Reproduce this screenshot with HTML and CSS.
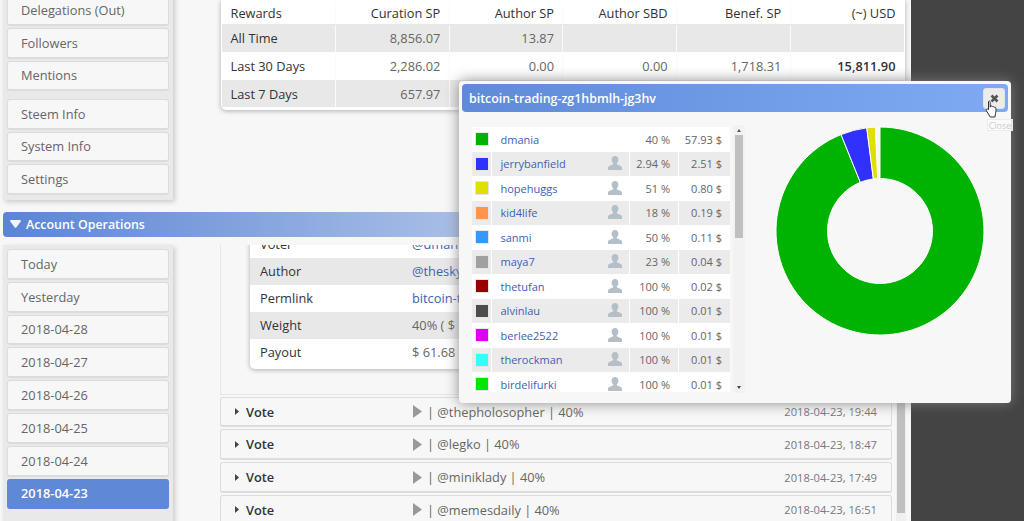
FILE: index.html
```html
<!DOCTYPE html>
<html lang="en">
  <head>
    <meta charset="UTF-8" />
    <title>Account Operations</title>
    <link rel="stylesheet" href="styles.css">
  </head>
  <body>
    <svg class="defs" width="0" height="0">
      <symbol id="user" viewBox="0 0 14 14">
        <path d="M7 0C4.900 0 3.600 1.600 3.600 3.700c0 1.500.7 2.900 1.600 3.600v.9L1.400 10C.5 10.400 0 11 0 12v2h14v-2c0-1-.5-1.600-1.400-2L8.800 8.200v-.9c.9-.7 1.600-2.100 1.600-3.600C10.400 1.600 9.100 0 7 0z"/>
      </symbol>
      <symbol id="play" viewBox="0 0 9 13">
        <path d="M0 0l9 6.500L0 13z"/>
      </symbol>
      <symbol id="caret" viewBox="0 0 4 7">
        <path d="M0 0l4 3.500L0 7z"/>
      </symbol>
    </svg>

    <div class="page">
      <div class="top-row">
        <nav class="side-panel">
          <div class="side-group">
            <a class="side-item">Delegations (Out)</a>
            <a class="side-item">Followers</a>
            <a class="side-item">Mentions</a>
          </div>
          <div class="side-group">
            <a class="side-item">Steem Info</a>
            <a class="side-item">System Info</a>
            <a class="side-item">Settings</a>
          </div>
        </nav>

        <div class="rewards-card">
          <table class="rewards">
            <tr class="head">
              <th class="label">Rewards</th>
              <th>Curation SP</th>
              <th>Author SP</th>
              <th>Author SBD</th>
              <th>Benef. SP</th>
              <th>(~) USD</th>
            </tr>
            <tr class="grey">
              <td class="label">All Time</td>
              <td>8,856.07</td>
              <td>13.87</td>
              <td></td>
              <td></td>
              <td></td>
            </tr>
            <tr>
              <td class="label">Last 30 Days</td>
              <td>2,286.02</td>
              <td>0.00</td>
              <td>0.00</td>
              <td>1,718.31</td>
              <td class="total">15,811.90</td>
            </tr>
            <tr class="grey">
              <td class="label">Last 7 Days</td>
              <td>657.97</td>
              <td></td>
              <td></td>
              <td></td>
              <td></td>
            </tr>
          </table>
        </div>
      </div>

      <div class="section-bar">
        <svg class="section-arrow" width="11" height="8" viewBox="0 0 11 8"><path d="M1 0h9c.8 0 1.200.8.700 1.400L6.200 7.400c-.4.400-1 .4-1.400 0L.3 1.400C-.2.8.2 0 1 0z"/></svg>
        <span>Account Operations</span>
      </div>

      <div class="ops-row">
        <nav class="side-panel dates">
          <div class="side-group">
            <a class="side-item">Today</a>
            <a class="side-item">Yesterday</a>
            <a class="side-item">2018-04-28</a>
            <a class="side-item">2018-04-27</a>
            <a class="side-item">2018-04-26</a>
            <a class="side-item">2018-04-25</a>
            <a class="side-item">2018-04-24</a>
            <a class="side-item active">2018-04-23</a>
          </div>
        </nav>

        <div class="ops-scroll">
          <div class="ops-list">
            <div class="op-open">
              <div class="op-card">
                <div class="op-line"><b>Voter</b><a>@dmani</a></div>
                <div class="op-line grey"><b>Author</b><a>@thesky</a></div>
                <div class="op-line"><b>Permlink</b><a>bitcoin-t</a></div>
                <div class="op-line grey"><b>Weight</b><span>40% ( $</span></div>
                <div class="op-line"><b>Payout</b><span>$ 61.68</span></div>
              </div>
            </div>
            <div class="op-row">
              <svg class="caret"><use href="#caret"/></svg>
              <b class="op-type">Vote</b>
              <svg class="play"><use href="#play"/></svg>
              <span class="op-text">| @thepholosopher | 40%</span>
              <span class="op-date">2018-04-23, 19:44</span>
            </div>
            <div class="op-row">
              <svg class="caret"><use href="#caret"/></svg>
              <b class="op-type">Vote</b>
              <svg class="play"><use href="#play"/></svg>
              <span class="op-text">| @legko | 40%</span>
              <span class="op-date">2018-04-23, 18:47</span>
            </div>
            <div class="op-row">
              <svg class="caret"><use href="#caret"/></svg>
              <b class="op-type">Vote</b>
              <svg class="play"><use href="#play"/></svg>
              <span class="op-text">| @miniklady | 40%</span>
              <span class="op-date">2018-04-23, 17:49</span>
            </div>
            <div class="op-row">
              <svg class="caret"><use href="#caret"/></svg>
              <b class="op-type">Vote</b>
              <svg class="play"><use href="#play"/></svg>
              <span class="op-text">| @memesdaily | 40%</span>
              <span class="op-date">2018-04-23, 16:51</span>
            </div>
          </div>
          <div class="ops-track"><div class="ops-thumb"></div></div>
        </div>
      </div>
    </div>

    <!-- payout popup -->
    <div class="modal">
      <div class="modal-head">
        <span>bitcoin-trading-zg1hbmlh-jg3hv</span>
        <button class="modal-close">
          <svg width="9" height="9" viewBox="0 0 9 9"><path d="M1.500 1.500l6 6M7.500 1.500l-6 6"/></svg>
        </button>
      </div>
      <div class="modal-body">
        <div class="voters-wrap">
          <div class="voters">
            <div class="voter"><i class="swatch c1"></i><a class="name">dmania</a><span class="pct">40 %</span><span class="usd">57.93 $</span></div>
            <div class="voter grey"><i class="swatch c2"></i><a class="name">jerrybanfield<svg class="user"><use href="#user"/></svg></a><span class="pct">2.94 %</span><span class="usd">2.51 $</span></div>
            <div class="voter"><i class="swatch c3"></i><a class="name">hopehuggs<svg class="user"><use href="#user"/></svg></a><span class="pct">51 %</span><span class="usd">0.80 $</span></div>
            <div class="voter grey"><i class="swatch c4"></i><a class="name">kid4life<svg class="user"><use href="#user"/></svg></a><span class="pct">18 %</span><span class="usd">0.19 $</span></div>
            <div class="voter"><i class="swatch c5"></i><a class="name">sanmi<svg class="user"><use href="#user"/></svg></a><span class="pct">50 %</span><span class="usd">0.11 $</span></div>
            <div class="voter grey"><i class="swatch c6"></i><a class="name">maya7<svg class="user"><use href="#user"/></svg></a><span class="pct">23 %</span><span class="usd">0.04 $</span></div>
            <div class="voter"><i class="swatch c7"></i><a class="name">thetufan<svg class="user"><use href="#user"/></svg></a><span class="pct">100 %</span><span class="usd">0.02 $</span></div>
            <div class="voter grey"><i class="swatch c8"></i><a class="name">alvinlau<svg class="user"><use href="#user"/></svg></a><span class="pct">100 %</span><span class="usd">0.01 $</span></div>
            <div class="voter"><i class="swatch c9"></i><a class="name">berlee2522<svg class="user"><use href="#user"/></svg></a><span class="pct">100 %</span><span class="usd">0.01 $</span></div>
            <div class="voter grey"><i class="swatch c10"></i><a class="name">therockman<svg class="user"><use href="#user"/></svg></a><span class="pct">100 %</span><span class="usd">0.01 $</span></div>
            <div class="voter"><i class="swatch c11"></i><a class="name">birdelifurki<svg class="user"><use href="#user"/></svg></a><span class="pct">100 %</span><span class="usd">0.01 $</span></div>
          </div>
          <div class="voters-track">
            <i class="arrow up"></i>
            <div class="voters-thumb"></div>
            <i class="arrow down"></i>
          </div>
        </div>
        <svg class="donut" width="210" height="210" viewBox="0 0 210 210">
          <path fill="#00b300" d="M105 1A104 104 0 1 1 66.040 8.570L85.330 56.320A52.500 52.500 0 1 0 105 52.500z"/>
          <path fill="#3030ff" d="M66.040 8.570A104 104 0 0 1 91.780 1.840L98.330 52.920A52.500 52.500 0 0 0 85.330 56.320z"/>
          <path fill="#dfdf00" d="M91.780 1.840A104 104 0 0 1 100.280 1.110L102.620 52.550A52.500 52.500 0 0 0 98.330 52.920z"/>
        </svg>
      </div>
    </div>

    <div class="tooltip">Close</div>
    <svg class="cursor" width="14" height="19" viewBox="0 0 14 19">
      <path d="M3.500 1.500c.7-.7 1.700-.3 1.700.7v5l.3-1.200c.9-.4 1.500 0 1.700.7.800-.5 1.600-.2 1.800.6.900-.4 1.700 0 1.900.8.300 1.800.2 3.900-.4 5.600l-.6 3.300H5.200L1.600 11c-.6-.8-.4-1.700.3-2 .6-.2 1.100.1 1.600.7z"/>
    </svg>
  </body>
</html>
```

FILE: styles.css
```css
* {
  margin: 0;
  padding: 0;
  box-sizing: border-box;
}

body {
  font-family: "Open Sans", "Liberation Sans", sans-serif;
  font-size: 12.800px;
  background-color: #444;
  height: 521px;
  overflow: hidden;
  position: relative;
}

.defs {
  position: absolute;
}

.page {
  width: 911px;
  height: 527px;
  margin-top: -6px;
  background-color: #f7f7f7;
  overflow: hidden;
}

/* top row */
.top-row {
  display: flex;
  align-items: flex-start;
}

.side-panel {
  width: 170px;
  margin-left: 3px;
  padding: 1px 4px 4.500px;
  background-color: #e9e9e9;
  box-shadow: 2px 2px 5px rgba(0, 0, 0, 0.18);
  display: flex;
  flex-direction: column;
  gap: 7.400px;
}

.side-group {
  display: flex;
  flex-direction: column;
  gap: 2px;
}

.side-item {
  height: 30.800px;
  padding-left: 13px;
  display: flex;
  align-items: center;
  color: #666;
  background-color: #f7f7f7;
  border: 1px solid #dcdcdc;
  border-bottom-width: 2px;
  border-radius: 3px;
}

.side-item.active {
  background-color: #5f88d6;
  border-color: #5f88d6;
  color: #fff;
  font-weight: 600;
}

.rewards-card {
  width: 684px;
  margin: 6px 0 0 48px;
  padding: 3px 1px 3px;
  background-color: #fff;
  border-radius: 0 0 5px 5px;
  box-shadow: 0 1px 5px rgba(0, 0, 0, 0.3);
}

.rewards {
  width: 682px;
  table-layout: fixed;
  border-collapse: collapse;
}

.rewards th,
.rewards td {
  width: 113px;
  height: 28px;
  padding: 0 8.500px;
  text-align: right;
  color: #666;
  font-weight: 400;
  border-left: 1px solid #fafafa;
}

.rewards tr:nth-child(4) td {
  height: 27px;
}

.rewards th {
  height: 21px;
  color: #333;
  font-weight: 400;
  border-bottom: 1px solid #e6e6e6;
}

.rewards .label {
  text-align: left;
  color: #333;
  border-left: none;
}

.rewards .grey td {
  background-color: #e8e8e8;
}

.rewards .total {
  color: #333;
  font-weight: 600;
}

/* section header */
.section-bar {
  height: 25px;
  margin: 12px 0 8px 3px;
  padding-left: 7px;
  display: flex;
  align-items: center;
  gap: 5px;
  color: #fff;
  font-size: 12.400px;
  font-weight: 600;
  border-radius: 4px 0 0 4px;
  background: linear-gradient(90deg, #5a85d5, #f7f7f7);
}

.section-arrow {
  fill: #f4f4f4;
}

/* operations */
.ops-row {
  display: flex;
  align-items: flex-start;
  gap: 47px;
}

.dates {
  height: 300px;
  padding-top: 4.300px;
}

.ops-scroll {
  width: 686px;
  height: 290px;
  display: flex;
  justify-content: space-between;
  overflow: hidden;
}

.ops-list {
  width: 672px;
  display: flex;
  flex-direction: column;
  gap: 2px;
}

.op-open {
  height: 150px;
  padding: 0 0 0 29px;
  border-left: 1px solid #e6e6e6;
  border-bottom: 1px solid #e6e6e6;
  overflow: hidden;
  flex: none;
}

.op-card {
  width: 610px;
  margin-top: -14px;
  background-color: #fff;
  border-radius: 0 0 5px 5px;
  box-shadow: 0 1px 5px rgba(0, 0, 0, 0.3);
  padding-bottom: 3px;
}

.op-line {
  height: 27px;
  padding-left: 10px;
  display: flex;
  align-items: center;
  color: #666;
}

.op-line.grey {
  background-color: #e8e8e8;
}

.op-line b {
  width: 152px;
  color: #333;
  font-weight: 400;
}

.op-line a {
  color: #3a62b5;
}

.op-row {
  height: 30.800px;
  padding: 0 14px 0 14px;
  display: flex;
  align-items: center;
  flex: none;
  color: #666;
  background-color: #f7f7f7;
  border: 1px solid #dcdcdc;
  border-bottom-width: 2px;
  border-radius: 3px;
}

.caret {
  width: 4px;
  height: 7px;
  fill: #444;
}

.op-type {
  width: 167px;
  margin-left: 7px;
  color: #333;
  font-weight: 600;
}

.play {
  width: 9px;
  height: 13px;
  fill: #999;
}

.op-text {
  margin-left: 5px;
}

.op-date {
  margin-left: auto;
  font-size: 11.200px;
  color: #777;
}

.ops-track {
  width: 10px;
  background-color: #efefef;
  padding: 0 1px;
}

.ops-thumb {
  height: 268px;
  background-color: #c0c0c0;
}

/* popup */
.modal {
  position: absolute;
  left: 459px;
  top: 81px;
  width: 552px;
  height: 322px;
  padding: 3px 3px;
  background-color: #f7f7f7;
  border-radius: 4px;
  box-shadow: 0 0 14px rgba(125, 125, 125, 0.9);
}

.modal-head {
  height: 28px;
  padding: 0 3px 0 7px;
  display: flex;
  align-items: center;
  justify-content: space-between;
  color: #fff;
  font-size: 12.400px;
  font-weight: 600;
  border-radius: 4px;
  background: linear-gradient(90deg, #5f8ad9, #7faaf3);
}

.modal-close {
  width: 22px;
  height: 21px;
  display: flex;
  align-items: center;
  justify-content: center;
  border: 1px solid #e4e4e4;
  border-radius: 3px;
  background-color: #ececec;
}

.modal-close svg {
  stroke: #555;
  stroke-width: 2.600px;
  fill: none;
}

.modal-body {
  position: relative;
  padding: 12.500px 0 0 10px;
}

.voters-wrap {
  display: flex;
  gap: 3px;
  align-items: flex-start;
}

.voters {
  width: 258px;
  height: 264.500px;
  margin-top: 2.500px;
  overflow: hidden;
  background-color: #fff;
}

.voter {
  height: 24.500px;
  display: flex;
  align-items: center;
  font-size: 11px;
  color: #666;
}

.voter.grey {
  background-color: #ebebeb;
}

.swatch {
  width: 14px;
  height: 14px;
  margin-left: 2.500px;
  border: 1px solid #e6e6e6;
  flex: none;
}

.c1 { background-color: #00b300; }
.c2 { background-color: #3030ff; }
.c3 { background-color: #dfdf00; }
.c4 { background-color: #ff944d; }
.c5 { background-color: #3399ff; }
.c6 { background-color: #a0a0a0; }
.c7 { background-color: #990000; }
.c8 { background-color: #4d4d4d; }
.c9 { background-color: #e000f0; }
.c10 { background-color: #33ffff; }
.c11 { background-color: #00e600; }

.name {
  width: 138px;
  height: 100%;
  margin-left: 2.500px;
  padding: 0 7.500px 0 8.500px;
  display: flex;
  align-items: center;
  justify-content: space-between;
  color: #3a62b5;
  border-left: 1px solid #fff;
}

.user {
  width: 14px;
  height: 14px;
  margin-top: -1px;
  fill: #b4bfc7;
}

.pct,
.usd {
  height: 100%;
  padding-right: 8px;
  display: flex;
  align-items: center;
  justify-content: flex-end;
  border-left: 1px solid #fff;
}

.pct {
  width: 49px;
}

.usd {
  width: 52px;
}

.voters-track {
  width: 12px;
  height: 268px;
  background-color: #f2f2f2;
  position: relative;
  padding: 10px 2px 0;
}

.voters-thumb {
  height: 103px;
  background-color: #c0c0c0;
}

.arrow {
  position: absolute;
  left: 3.500px;
  width: 0;
  height: 0;
  border-left: 2.500px solid transparent;
  border-right: 2.500px solid transparent;
}

.arrow.up {
  top: 4px;
  border-bottom: 3px solid #555;
}

.arrow.down {
  bottom: 4px;
  border-top: 3px solid #444;
}

.donut {
  position: absolute;
  left: 313px;
  top: 14px;
}

.donut path {
  stroke: #fff;
  stroke-width: 1;
}

.tooltip {
  position: absolute;
  left: 987px;
  top: 119px;
  width: 26px;
  height: 12px;
  font-size: 9px;
  line-height: 11px;
  text-align: center;
  color: #ccc;
  background-color: rgba(250, 250, 250, 0.85);
  border: 1px solid #ececec;
}

.cursor {
  position: absolute;
  left: 985px;
  top: 100px;
  fill: #fff;
  stroke: #333;
  stroke-width: 1;
}
```
